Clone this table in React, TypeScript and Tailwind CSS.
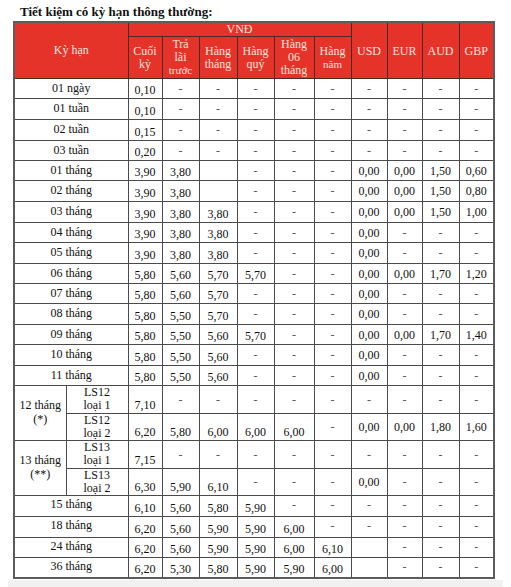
/**
 * Bảng lãi suất tiết kiệm có kỳ hạn thông thường
 */

const D = '-';

interface Row {
  k: string;
  h: number;
  v: string[];
  top?: boolean;
}

interface LsGroup {
  k: string[];
  rows: { sub: string[]; h: number; v: string[] }[];
}

const ROWS_A: Row[] = [
  { k: '01 ngày', h: 20, v: ['0,10', D, D, D, D, D, D, D, D, D] },
  { k: '01 tuần', h: 21, v: ['0,10', D, D, D, D, D, D, D, D, D] },
  { k: '02 tuần', h: 21, v: ['0,15', D, D, D, D, D, D, D, D, D] },
  { k: '03 tuần', h: 20, v: ['0,20', D, D, D, D, D, D, D, D, D] },
  { k: '01 tháng', h: 20, v: ['3,90', '3,80', '', D, D, D, '0,00', '0,00', '1,50', '0,60'] },
  { k: '02 tháng', h: 21, v: ['3,90', '3,80', '', D, D, D, '0,00', '0,00', '1,50', '0,80'] },
  { k: '03 tháng', h: 21, v: ['3,90', '3,80', '3,80', D, D, D, '0,00', '0,00', '1,50', '1,00'] },
  { k: '04 tháng', h: 20, v: ['3,90', '3,80', '3,80', D, D, D, '0,00', D, D, D] },
  { k: '05 tháng', h: 21, v: ['3,90', '3,80', '3,80', D, D, D, '0,00', D, D, D] },
  { k: '06 tháng', h: 20, v: ['5,80', '5,60', '5,70', '5,70', D, D, '0,00', '0,00', '1,70', '1,20'] },
  { k: '07 tháng', h: 20, v: ['5,80', '5,60', '5,70', D, D, D, '0,00', D, D, D] },
  { k: '08 tháng', h: 21, v: ['5,80', '5,50', '5,70', D, D, D, '0,00', D, D, D] },
  { k: '09 tháng', h: 20, v: ['5,80', '5,50', '5,60', '5,70', D, D, '0,00', '0,00', '1,70', '1,40'] },
  { k: '10 tháng', h: 21, v: ['5,80', '5,50', '5,60', D, D, D, '0,00', D, D, D] },
  { k: '11 tháng', h: 20, v: ['5,80', '5,50', '5,60', D, D, D, '0,00', D, D, D] },
];

const LS: LsGroup[] = [
  {
    k: ['12 tháng', '(*)'],
    rows: [
      { sub: ['LS12', 'loại 1'], h: 28, v: ['7,10', D, D, D, D, D, D, D, D, D] },
      { sub: ['LS12', 'loại 2'], h: 27, v: ['6,20', '5,80', '6,00', '6,00', '6,00', D, '0,00', '0,00', '1,80', '1,60'] },
    ],
  },
  {
    k: ['13 tháng', '(**)'],
    rows: [
      { sub: ['LS13', 'loại 1'], h: 28, v: ['7,15', D, D, D, D, D, D, D, D, D] },
      { sub: ['LS13', 'loại 2'], h: 27, v: ['6,30', '5,90', '6,10', D, D, D, '0,00', D, D, D] },
    ],
  },
];

const ROWS_B: Row[] = [
  { k: '15 tháng', h: 21, top: true, v: ['6,10', '5,60', '5,80', '5,90', D, D, D, D, D, D] },
  { k: '18 tháng', h: 21, top: true, v: ['6,20', '5,60', '5,90', '5,90', '6,00', D, D, D, D, D] },
  { k: '24 tháng', h: 20, top: true, v: ['6,20', '5,60', '5,90', '5,90', '6,00', '6,10', '', D, D, D] },
  { k: '36 tháng', h: 20, top: true, v: ['6,20', '5,30', '5,80', '5,90', '5,90', '6,00', '', D, D, D] },
];

// 52 + 62 = cột kỳ hạn
const COL_W = [52, 62, 34, 37, 38, 37, 40, 37, 36, 35, 37, 35];

const td = 'border border-[#4a4a4a] p-0 text-center';
const th = 'border border-[#4a2a2a] p-0 text-center font-normal text-[#fde4df]';

function Val({ v, i, top }: { v: string; i: number; top?: boolean }) {
  const num = v !== D && v !== '';
  const low = num && i < 6;
  return (
    <td
      className={`${td} ${low ? 'align-bottom leading-[14px] pb-px' : top ? 'align-top pt-[2px] leading-[14px]' : 'align-middle leading-[14px]'} ${
        v === D ? 'text-[#555]' : 'text-[#111]'
      }`}
    >
      {v}
    </td>
  );
}

export default function App() {
  return (
    <div className="w-[511px] h-[587px] bg-white font-['Liberation_Serif','Times_New_Roman',serif] overflow-hidden">
      <div className="pl-[20px] pt-[4px] h-[21px] text-[13px] leading-[16px] font-bold text-[#111]">
        Tiết kiệm có kỳ hạn thông thường:
      </div>

      <table className="ml-[13px] w-[480px] table-fixed border-collapse border-2 border-[#5c5c5c] text-[12px]">
        <colgroup>
          {COL_W.map((w, i) => (
            <col key={i} style={{ width: w }} />
          ))}
        </colgroup>
        <thead className="bg-[#e6332a]">
          <tr className="h-[14px]">
            <th rowSpan={2} colSpan={2} className={`${th} pb-[2px]`}>Kỳ hạn</th>
            <th colSpan={6} className={`${th} leading-[13px]`}>VNĐ</th>
            <th rowSpan={2} className={th}>USD</th>
            <th rowSpan={2} className={th}>EUR</th>
            <th rowSpan={2} className={th}>AUD</th>
            <th rowSpan={2} className={th}>GBP</th>
          </tr>
          <tr className="h-[42px] leading-[13px]">
            <th className={th}>Cuối<br />kỳ</th>
            <th className={th}>Trả<br />lãi<br /><span className="text-[11px]">trước</span></th>
            <th className={th}>Hàng<br />tháng</th>
            <th className={th}>Hàng<br />quý</th>
            <th className={th}>Hàng<br />06<br />tháng</th>
            <th className={th}>Hàng<br /><span className="text-[11px]">năm</span></th>
          </tr>
        </thead>
        <tbody>
          {ROWS_A.map((r) => (
            <tr key={r.k} style={{ height: r.h }}>
              <td colSpan={2} className={`${td} leading-[14px] pb-[2px] text-[#111]`}>{r.k}</td>
              {r.v.map((v, i) => (
                <Val key={i} v={v} i={i} />
              ))}
            </tr>
          ))}

          {LS.map((g) =>
            g.rows.map((r, ri) => (
              <tr key={g.k[0] + ri} style={{ height: r.h }}>
                {ri === 0 && (
                  <td rowSpan={2} className={`${td} leading-[14px] pb-[2px] text-[#111]`}>
                    {g.k[0]}
                    <br />
                    {g.k[1]}
                  </td>
                )}
                <td className={`${td} align-top leading-[13px] text-[#111]`}>
                  {r.sub[0]}
                  <br />
                  {r.sub[1]}
                </td>
                {r.v.map((v, i) => (
                  <Val key={i} v={v} i={i} />
                ))}
              </tr>
            )),
          )}

          {ROWS_B.map((r) => (
            <tr key={r.k} style={{ height: r.h }}>
              <td colSpan={2} className={`${td} align-top leading-[14px] pt-px text-[#111]`}>{r.k}</td>
              {r.v.map((v, i) => (
                <Val key={i} v={v} i={i} top={r.top} />
              ))}
            </tr>
          ))}
        </tbody>
      </table>

      <div className="mx-[8px] mt-px h-[10px] bg-[#f1f1f1]" />
    </div>
  );
}
